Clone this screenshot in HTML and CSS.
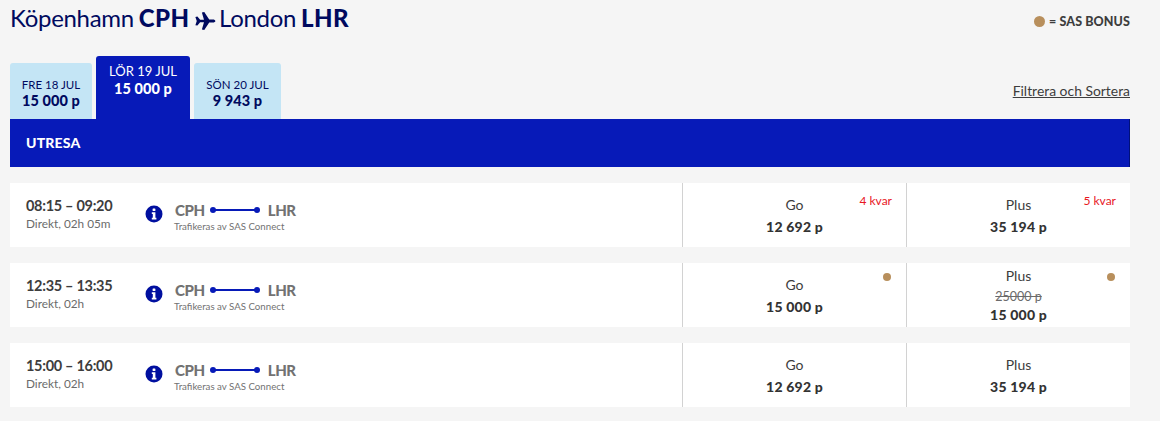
FILE: index.html
```html
<!DOCTYPE html>
<html lang="sv">
<head>
<meta charset="utf-8">
<title>Köpenhamn – London</title>
<link rel="stylesheet" href="styles.css">
</head>
<body>
<div class="page">
  <header class="top">
    <h1 class="title">Köpenhamn <b>CPH</b>
      <svg class="plane" viewBox="0 0 24 24" width="22" height="22"><path d="M1.500 7.500l2.200-.4 3 3.600 4.200-.1L8.600 2.600l2.600-.4 5.400 8.200 4-.1c1.500 0 2.700.7 2.700 1.700s-1.200 1.700-2.700 1.700l-4-.1-5.400 8.200-2.600-.4 2.300-8-4.200-.1-3 3.600-2.200-.4 1.500-4.500z"/></svg>
      London <b>LHR</b></h1>
    <div class="legend"><span class="dot"></span>= SAS BONUS</div>
  </header>
  <div class="tabbar">
    <div class="tabs">
      <div class="tab tab-a"><span>FRE 18 JUL</span><b>15 000 p</b></div>
      <div class="tab tab-active"><span>LÖR 19 JUL</span><b>15 000 p</b></div>
      <div class="tab tab-c"><span>SÖN 20 JUL</span><b>9 943 p</b></div>
    </div>
    <a class="filter">Filtrera och Sortera</a>
  </div>
  <div class="banner">UTRESA</div>

  <div class="row">
    <div class="info">
      <div class="times"><div class="time">08:15 – 09:20</div><div class="dur">Direkt, 02h 05m</div></div>
      <svg class="i" viewBox="0 0 18 18" width="18" height="18"><circle cx="9" cy="9" r="8.500"/><rect class="ig" x="7.600" y="3.400" width="2.800" height="2.600" rx=".6"/><path class="ig" d="M6.800 7.300h3.600v5.400h1v1.700H6.800v-1.700h1v-3.700h-1z"/></svg>
      <div class="route">
        <div class="legs"><b>CPH</b><span class="line"></span><b>LHR</b></div>
        <div class="op">Trafikeras av SAS Connect</div>
      </div>
    </div>
    <div class="fare"><div class="cls">Go</div><div class="pts">12 692 p</div><span class="kvar">4 kvar</span></div>
    <div class="fare"><div class="cls">Plus</div><div class="pts">35 194 p</div><span class="kvar">5 kvar</span></div>
  </div>

  <div class="row">
    <div class="info">
      <div class="times"><div class="time">12:35 – 13:35</div><div class="dur">Direkt, 02h</div></div>
      <svg class="i" viewBox="0 0 18 18" width="18" height="18"><circle cx="9" cy="9" r="8.500"/><rect class="ig" x="7.600" y="3.400" width="2.800" height="2.600" rx=".6"/><path class="ig" d="M6.800 7.300h3.600v5.400h1v1.700H6.800v-1.700h1v-3.700h-1z"/></svg>
      <div class="route">
        <div class="legs"><b>CPH</b><span class="line"></span><b>LHR</b></div>
        <div class="op">Trafikeras av SAS Connect</div>
      </div>
    </div>
    <div class="fare"><div class="cls">Go</div><div class="pts">15 000 p</div><span class="dot dot-abs"></span></div>
    <div class="fare fare-tall"><div class="cls">Plus</div><div class="old">25000 p</div><div class="pts">15 000 p</div><span class="dot dot-abs"></span></div>
  </div>

  <div class="row">
    <div class="info">
      <div class="times"><div class="time">15:00 – 16:00</div><div class="dur">Direkt, 02h</div></div>
      <svg class="i" viewBox="0 0 18 18" width="18" height="18"><circle cx="9" cy="9" r="8.500"/><rect class="ig" x="7.600" y="3.400" width="2.800" height="2.600" rx=".6"/><path class="ig" d="M6.800 7.300h3.600v5.400h1v1.700H6.800v-1.700h1v-3.700h-1z"/></svg>
      <div class="route">
        <div class="legs"><b>CPH</b><span class="line"></span><b>LHR</b></div>
        <div class="op">Trafikeras av SAS Connect</div>
      </div>
    </div>
    <div class="fare"><div class="cls">Go</div><div class="pts">12 692 p</div></div>
    <div class="fare"><div class="cls">Plus</div><div class="pts">35 194 p</div></div>
  </div>
</div>
</body>
</html>
```
FILE: styles.css
```css
* { box-sizing: border-box; }
html, body { margin: 0; padding: 0; }
body {
  background: #f5f5f5;
  font-family: Lato, "Open Sans", "Liberation Sans", sans-serif;
  color: #3d3d3d;
  height: 421px;
  overflow: hidden;
}
.page { width: 1120px; margin-left: 10px; }
.top { display: flex; justify-content: space-between; height: 56px; }
.title {
  margin: 4px 0 0;
  font-size: 24px;
  line-height: 28px;
  font-weight: 400;
  color: #000a5f;
  letter-spacing: -.3px;
  word-spacing: -1px;
}
.title b { font-weight: 900; letter-spacing: .4px; }
.plane { fill: #000a5f; vertical-align: -5px; margin: 0 -2px 0 0; }
.legend {
  display: flex;
  align-items: center;
  height: 14px;
  margin-top: 14px;
  font-size: 12.500px;
  font-weight: 900;
  letter-spacing: .1px;
  white-space: nowrap;
}
.dot {
  display: inline-block;
  width: 11px;
  height: 11px;
  border-radius: 50%;
  background: #b88f5c;
  margin-right: 4px;
}
.tabbar { display: flex; justify-content: space-between; align-items: flex-end; height: 63px; }
.tabs { display: flex; align-items: flex-end; gap: 4px; }
.tab {
  display: flex;
  flex-direction: column;
  align-items: center;
  height: 56px;
  padding-top: 14px;
  background: #c4e5f5;
  color: #000a5f;
  border-radius: 3px 3px 0 0;
  font-size: 11.500px;
  line-height: 15px;
}
.tab b { font-size: 14.500px; font-weight: 900; line-height: 18px; letter-spacing: .1px; }
.tab-a { width: 82px; }
.tab-c { width: 87px; }
.tab-active { width: 94px; height: 63px; padding-top: 8px; background: #071ab8; color: #fff; font-size: 13px; }
.tab-active b { line-height: 20px; }
.filter {
  font-size: 13.900px;
  line-height: 17px;
  margin-bottom: 20px;
  text-decoration: underline;
  color: #3d3d3d;
}
.banner {
  height: 48px;
  background: #071ab8;
  border-right: 1px solid #00107a;
  color: #fff;
  font-size: 14px;
  font-weight: 900;
  line-height: 48px;
  padding-left: 16px;
  margin-bottom: 16px;
  letter-spacing: .2px;
}
.row { display: flex; height: 64px; background: #fff; margin-bottom: 16px; }
.info { width: 672px; display: flex; align-items: center; padding-left: 16px; }
.times { width: 119px; margin-top: -1px; }
.time { font-size: 14.500px; font-weight: 700; line-height: 18px; letter-spacing: -.3px; white-space: nowrap; }
.dur { font-size: 11.800px; line-height: 18px; color: #6b6b6b; white-space: nowrap; }
.i { fill: #000f9f; flex: none; margin-top: -2px; }
.i .ig { fill: #fff; }
.route { margin-left: 12px; margin-top: 1px; }
.legs { display: flex; align-items: center; height: 20px; color: #727272; font-size: 15px; }
.legs b { font-weight: 900; letter-spacing: -.4px; }
.line {
  position: relative;
  display: block;
  width: 46px;
  height: 2px;
  margin: 0 10px 0 7px;
  background: #071ab8;
}
.line::before, .line::after {
  content: "";
  position: absolute;
  top: -2px;
  width: 6px;
  height: 6px;
  border-radius: 50%;
  background: #071ab8;
}
.line::before { left: -2px; }
.line::after { right: -2px; }
.op { font-size: 9.700px; line-height: 12px; color: #727272; white-space: nowrap; margin-left: -1px; }
.fare {
  position: relative;
  width: 224px;
  border-left: 1px solid #d2d2d2;
  display: flex;
  flex-direction: column;
  align-items: center;
  justify-content: center;
  padding-top: 4px;
}
.cls { font-size: 14px; line-height: 19px; font-weight: 400; }
.pts { font-size: 14px; line-height: 25px; font-weight: 900; letter-spacing: .2px; white-space: nowrap; color: #333; }
.old { font-size: 12.500px; line-height: 15px; color: #6b6b6b; text-decoration: line-through; margin-top: 4px; }
.fare-tall { padding-top: 1px; }
.fare-tall .pts { line-height: 22px; }
.kvar { position: absolute; top: 10px; right: 14px; font-size: 12px; line-height: 15px; color: #e8171f; }
.dot-abs { position: absolute; top: 10px; right: 15px; width: 8px; height: 8px; margin: 0; }
```
